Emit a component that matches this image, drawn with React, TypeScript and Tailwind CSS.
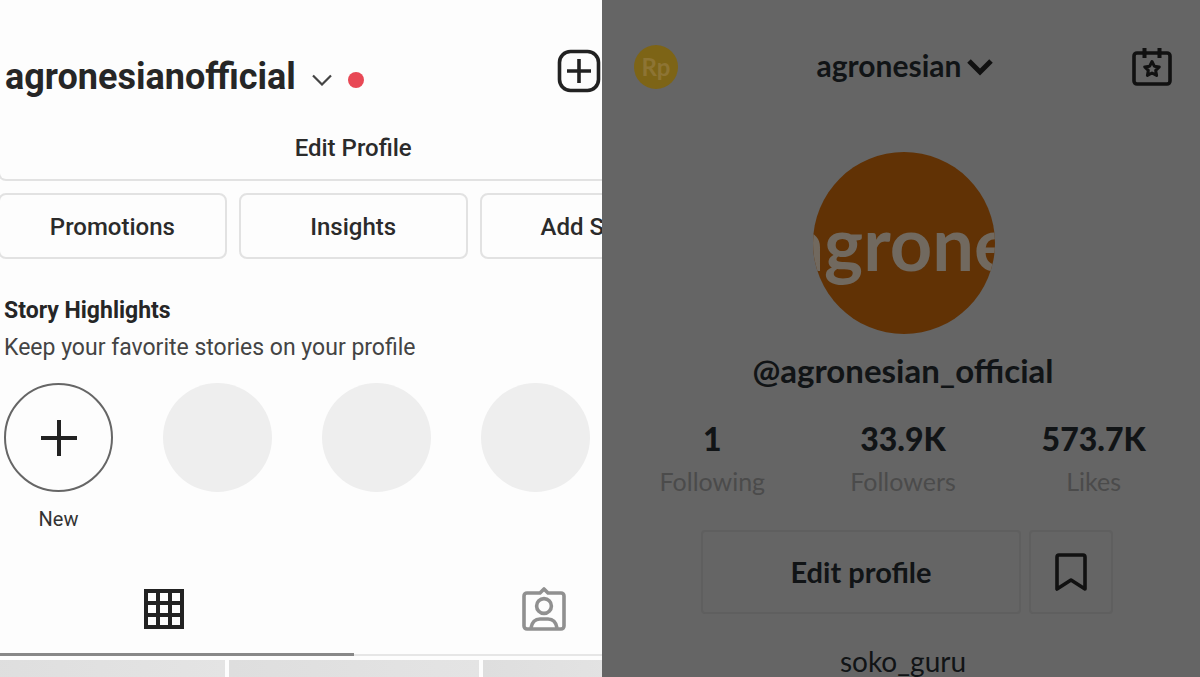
import type { ReactNode } from 'react';

const stats = [
  { value: '1', label: 'Following' },
  { value: '33.9K', label: 'Followers' },
  { value: '573.7K', label: 'Likes' },
];

function ActionButton({ children, className = '' }: { children: ReactNode; className?: string }) {
  return (
    <button
      type="button"
      className={`h-[66px] rounded-lg border-2 border-[#e2e2e2] text-2xl font-medium text-[#2b2b2b] ${className}`}
    >
      {children}
    </button>
  );
}

function GridIcon() {
  return (
    <svg width="40" height="40" viewBox="0 0 40 40" fill="none" stroke="#222" strokeWidth="4">
      <path d="M2 2h36v36H2zM14 2v36M26 2v36M2 14h36M2 26h36" />
    </svg>
  );
}

function TaggedIcon() {
  return (
    <svg width="44" height="44" viewBox="0 0 44 44" fill="none" stroke="#909090" strokeWidth="3.6" strokeLinejoin="round">
      <path d="M5 6h13l4-4 4 4h13a3 3 0 0 1 3 3v30a3 3 0 0 1-3 3H5a3 3 0 0 1-3-3V9a3 3 0 0 1 3-3z" />
      <circle cx="22" cy="19" r="7.4" />
      <path d="M9 41c1-6 4-9 9-9h8c5 0 8 3 9 9" />
    </svg>
  );
}

function CalendarIcon() {
  return (
    <svg width="40" height="40" viewBox="0 0 40 40" fill="none" stroke="#111" strokeWidth="3.6" strokeLinejoin="round">
      <rect x="2" y="6" width="36" height="31" rx="3" />
      <path d="M12.500 1v10M27.500 1v10" strokeWidth="4" />
      <path d="M20 14.500l2.300 4.700 5 .7-3.600 3.500.9 5-4.600-2.400-4.600 2.400.9-5-3.600-3.500 5-.7z" strokeWidth="3" />
    </svg>
  );
}

function InstagramProfile() {
  return (
    <section className="flex w-[calc(50%+2px)] flex-col overflow-hidden bg-[#fdfdfd] font-['Roboto',sans-serif] text-[#262626]">
      <header className="flex items-center pt-[49px] pl-[5px]">
        <h1 className="text-4xl leading-[56px] font-bold">agronesianofficial</h1>
        <div className="mt-1.5 ml-4 flex items-center gap-4">
          <button type="button" aria-label="Switch account">
            <svg width="20" height="12" viewBox="0 0 20 12" fill="none" stroke="#444" strokeWidth="2.200">
              <path d="M1 1.500l9 9 9-9" />
            </svg>
          </button>
          <span className="size-4 rounded-full bg-[#e84855]" />
        </div>
        <button type="button" aria-label="Create" className="mr-px mb-3 ml-auto">
          <svg width="44" height="44" viewBox="0 0 44 44" fill="none" stroke="#222" strokeWidth="3.600">
            <rect x="2.500" y="2.500" width="39" height="39" rx="11" />
            <path d="M22 10v24M10 22h24" />
          </svg>
        </button>
      </header>

      <div className="-ml-0.5 mt-[10px] w-[118%]">
        <ActionButton className="w-full rounded-t-none border-t-0 pt-0.5">Edit Profile</ActionButton>
        <div className="mt-3 grid grid-cols-3 gap-3">
          <ActionButton className="pt-0.5">Promotions</ActionButton>
          <ActionButton className="pt-0.5">Insights</ActionButton>
          <ActionButton className="pt-0.5 pl-[59px] text-left">Add S</ActionButton>
        </div>
      </div>

      <div className="mt-[33px] pl-1">
        <h2 className="text-[23px] leading-[37px] font-bold">Story Highlights</h2>
        <p className="text-[23px] leading-[37px] text-[#444]">Keep your favorite stories on your profile</p>
        <div className="mt-[17px] flex gap-[50px]">
          <div className="flex shrink-0 flex-col items-center">
            <button
              type="button"
              aria-label="New highlight"
              className="flex size-[109px] items-center justify-center rounded-full border-2 border-[#666]"
            >
              <svg width="36" height="36" viewBox="0 0 36 36" stroke="#222" strokeWidth="4">
                <path d="M18 0v36M0 18h36" />
              </svg>
            </button>
            <span className="mt-3 text-xl leading-[30px] text-[#333]">New</span>
          </div>
          <div className="size-[109px] shrink-0 rounded-full bg-[#eee]" />
          <div className="size-[109px] shrink-0 rounded-full bg-[#eee]" />
          <div className="size-[109px] shrink-0 rounded-full bg-[#eee]" />
        </div>
      </div>

      {/* Tabs and the photo grid run past both edges of the panel */}
      <nav className="-ml-[26px] mt-[30px] grid w-[760px] grid-cols-2">
        <button type="button" aria-label="Posts" className="flex h-[92px] items-center justify-center border-b-[3px] border-[#888]">
          <GridIcon />
        </button>
        <button type="button" aria-label="Tagged" className="flex h-[92px] items-center justify-center border-b-2 border-[#e6e6e6]">
          <TaggedIcon />
        </button>
      </nav>
      <div className="-ml-[26px] mt-1 grid min-h-4 w-[760px] flex-1 grid-cols-3 gap-1">
        <div className="bg-linear-to-r from-[#dedede] to-[#e4e4e4]" />
        <div className="bg-linear-to-r from-[#dedede] to-[#e4e4e4]" />
        <div className="bg-linear-to-r from-[#dedede] to-[#e8e8e8]" />
      </div>
    </section>
  );
}

function TikTokProfile() {
  return (
    <section className="flex flex-1 flex-col items-center overflow-hidden bg-[#656565] font-['Lato',sans-serif] text-[#111416]">
      <header className="flex w-full items-center justify-between pt-[45px] pr-7 pl-8">
        <button type="button" className="size-11 rounded-full bg-[#7d6416] text-2xl font-bold text-[#8d7434]">
          Rp
        </button>
        <button type="button" className="mb-1 flex items-center gap-1.5 text-[30px] leading-[40px] font-bold">
          agronesian
          <svg width="26" height="18" viewBox="0 0 26 18" fill="none" stroke="#111" strokeWidth="5" className="mt-1">
            <path d="M2 3l11 11L24 3" />
          </svg>
        </button>
        <button type="button" aria-label="Events">
          <CalendarIcon />
        </button>
      </header>

      <div className="mt-[63px] ml-1.5 flex size-[182px] items-center justify-center overflow-hidden rounded-full bg-[#613205]">
        <span className="pr-2 text-[74px] leading-none font-bold text-[#71695f]">agrone</span>
      </div>
      <h1 className="mt-4 ml-1 text-[33px] leading-[40px] font-bold">@agronesian_official</h1>

      <dl className="mt-7 ml-1 grid w-[572px] grid-cols-3 text-center">
        {stats.map((stat) => (
          <div key={stat.label} className="flex flex-col-reverse">
            <dt className="text-[25px] leading-[42px] text-[#4b4b4b]">{stat.label}</dt>
            <dd className="text-[32px] leading-[42px] font-black">{stat.value}</dd>
          </div>
        ))}
      </dl>

      <div className="mt-7 ml-3 flex gap-2">
        <button type="button" className="h-[84px] w-[320px] rounded border-2 border-[#5f5f5f] text-[29px] font-bold">
          Edit profile
        </button>
        <button type="button" aria-label="Saved" className="flex size-[84px] items-center justify-center rounded border-2 border-[#5f5f5f]">
          <svg width="32" height="38" viewBox="0 0 32 38" fill="none" stroke="#111" strokeWidth="3.600" strokeLinejoin="round">
            <path d="M4 2h24a2 2 0 0 1 2 2v32l-14-9-14 9V4a2 2 0 0 1 2-2z" />
          </svg>
        </button>
      </div>
      <p className="mt-8 ml-1 text-[28px] leading-[30px]">soko_guru</p>
    </section>
  );
}

export default function App() {
  return (
    <main className="flex min-h-screen">
      <InstagramProfile />
      <TikTokProfile />
    </main>
  );
}
